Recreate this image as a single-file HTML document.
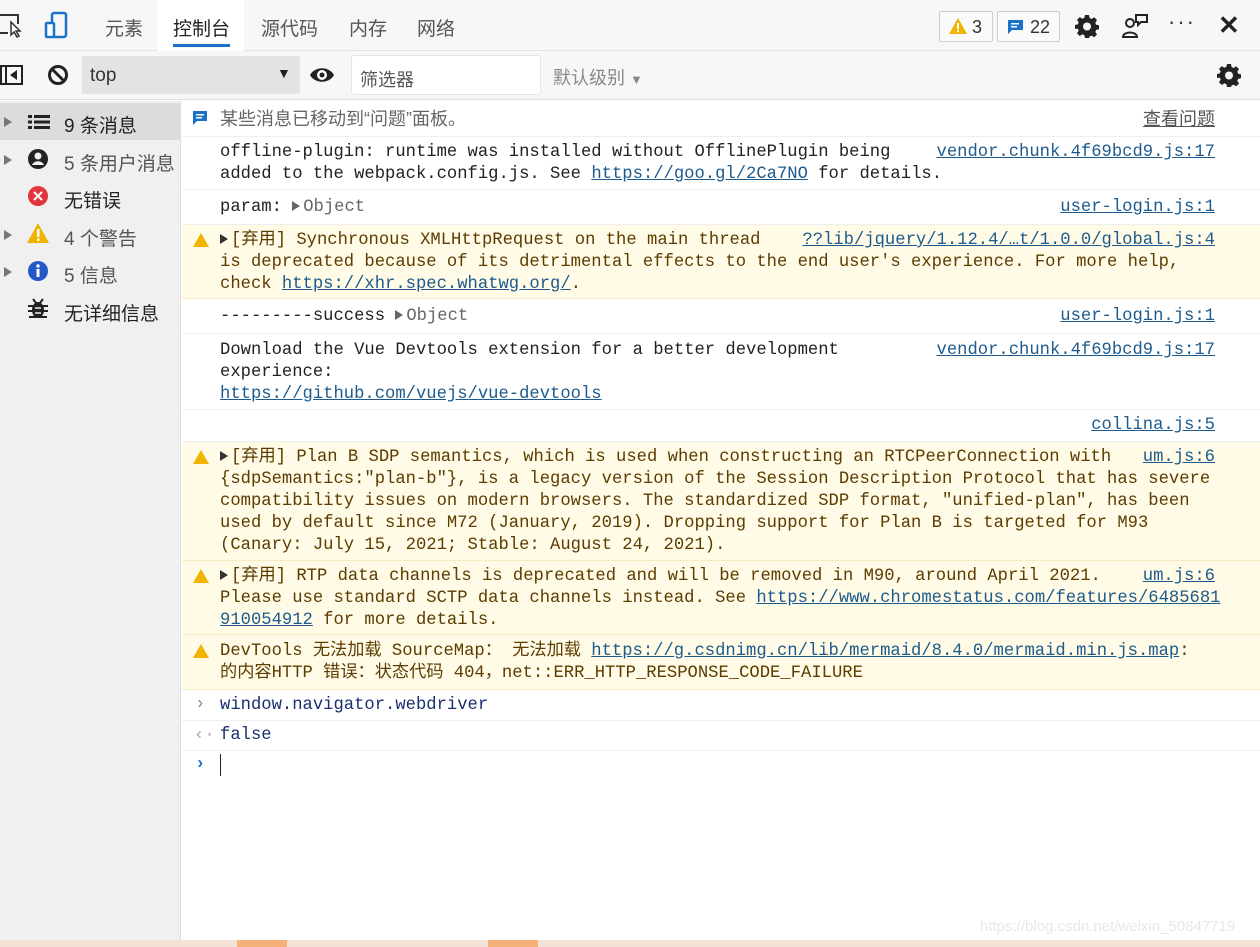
<!DOCTYPE html>
<html><head><meta charset="utf-8"><style>
*{margin:0;padding:0;box-sizing:border-box}
body{width:1260px;height:947px;overflow:hidden;background:#fff;font-family:"Liberation Sans","Noto Sans CJK SC",sans-serif;position:relative;color:#222}
.top{position:absolute;left:0;top:0;width:1260px;height:51px;background:#f7f7f7;border-bottom:1px solid #e4e4e4}
.tab{position:absolute;top:14px;font-size:19px;color:#555}
.bar{position:absolute;left:0;top:51px;width:1260px;height:49px;background:#f7f7f7;border-bottom:1px solid #e0e0e0}
.side{position:absolute;left:0;top:101px;width:181px;height:846px;background:#f0f0f0;border-right:1px solid #ddd}
.si{position:absolute;left:0;width:180px;height:37px;font-size:19px;color:#555}
.si .t{position:absolute;left:64px;top:8px}
.si .a{position:absolute;left:4px;top:14px;width:0;height:0;border-left:8px solid #777;border-top:5px solid transparent;border-bottom:5px solid transparent}
.row{position:absolute;left:182px;width:1078px;border-bottom:1px solid #eee;font-family:"Liberation Mono","Noto Sans CJK SC",monospace;font-size:17.2px;line-height:22px;color:#222}
.row .m{position:absolute;left:38px;white-space:pre}
.row .s{position:absolute;right:45px;color:#1d5b8e;text-decoration:underline}
.w{background:#fffbe6;border-bottom:1px solid #f5ecc0;color:#5c3c00}
a{color:#1d5b8e;text-decoration:underline}
.wi{position:absolute;left:11px;width:0;height:0;border-left:8px solid transparent;border-right:8px solid transparent;border-bottom:14px solid #f0b400}
.g{color:#666}
.tri{display:inline-block;width:0;height:0;border-left:8px solid #333;border-top:5px solid transparent;border-bottom:5px solid transparent;margin-right:3px}
</style></head><body>
<div class="top">
<svg style="position:absolute;left:0;top:12px" width="24" height="26"><path d="M0 3h18v9M0 21h8" stroke="#333" stroke-width="2" fill="none"/><path d="M11 10l0 13 3-3 3 5 2-1-3-5 4 0z" fill="#fff" stroke="#333" stroke-width="1.5"/></svg>
<svg style="position:absolute;left:44px;top:11px" width="26" height="28"><rect x="8" y="2" width="14" height="24" rx="2" stroke="#1a73c8" stroke-width="2.5" fill="none"/><rect x="2" y="12" width="8" height="14" rx="1" stroke="#1a73c8" stroke-width="2.5" fill="#fff"/></svg>
<div class="tab" style="left:105px">元素</div>
<div style="position:absolute;left:158px;top:0;width:86px;height:51px;background:#fff"></div>
<div class="tab" style="left:173px;color:#222">控制台</div>
<div style="position:absolute;left:173px;top:44px;width:57px;height:3px;background:#1a73c8"></div>
<div class="tab" style="left:261px">源代码</div>
<div class="tab" style="left:349px">内存</div>
<div class="tab" style="left:417px">网络</div>
<div style="position:absolute;left:939px;top:11px;width:54px;height:31px;border:1px solid #ccc;border-radius:2px;background:#fafafa"><svg style="position:absolute;left:9px;top:6px" width="18" height="16"><path d="M9 0L18 16H0z" fill="#f0b400"/><rect x="8" y="5" width="2" height="6" fill="#fff"/><rect x="8" y="12" width="2" height="2" fill="#fff"/></svg><span style="position:absolute;left:32px;top:5px;font-size:18px;color:#333">3</span></div>
<div style="position:absolute;left:997px;top:11px;width:63px;height:31px;border:1px solid #ccc;border-radius:2px;background:#fafafa"><svg style="position:absolute;left:10px;top:8px" width="15" height="15"><path d="M0 0h15v10H4l-4 4z" fill="#1a73c8"/><rect x="3" y="3" width="8" height="1.5" fill="#fff"/><rect x="3" y="6" width="6" height="1.5" fill="#fff"/></svg><span style="position:absolute;left:32px;top:5px;font-size:18px;color:#333">22</span></div>
<svg style="position:absolute;left:1075px;top:14px" width="24" height="24" viewBox="0 0 24 24"><path fill="#222" d="M10 1h4l.6 3 2 1 2.6-1.7 2.8 2.8L20.3 8.7l.9 2 2.8.6v4l-2.8.6-.9 2 1.7 2.6-2.8 2.8-2.6-1.7-2 .9L14 24h-4l-.6-2.8-2-.9-2.6 1.7-2.8-2.8 1.7-2.6-.9-2L0 15v-4l2.8-.6.9-2L2 5.9 4.8 3.1 7.4 4.8l2-1z"/><circle cx="12" cy="12.5" r="4" fill="#f7f7f7"/></svg>
<svg style="position:absolute;left:1122px;top:13px" width="28" height="26"><circle cx="8" cy="10" r="4" stroke="#222" stroke-width="2" fill="none"/><path d="M1 24c0-6 14-6 14 0z" stroke="#222" stroke-width="2" fill="none"/><path d="M14 2h11v7h-6l-3 3v-3h-2z" stroke="#222" stroke-width="2" fill="none"/></svg>
<div style="position:absolute;left:1168px;top:9px;font-size:22px;color:#333;letter-spacing:2px">···</div>
<div style="position:absolute;left:1218px;top:10px;font-size:26px;font-weight:bold;color:#222">✕</div>
</div>
<div class="bar">
<svg style="position:absolute;left:0;top:14px" width="24" height="20"><rect x="1" y="1" width="21" height="18" stroke="#222" stroke-width="2" fill="none"/><rect x="5" y="1" width="2" height="18" fill="#222"/><path d="M17 5v10l-7-5z" fill="#222"/></svg>
<svg style="position:absolute;left:47px;top:13px" width="22" height="22"><circle cx="11" cy="11" r="8.5" stroke="#222" stroke-width="3" fill="none"/><path d="M5 5l12 12" stroke="#222" stroke-width="3"/></svg>
<div style="position:absolute;left:82px;top:5px;width:218px;height:38px;background:#e3e3e3;border-radius:2px"><span style="position:absolute;left:8px;top:9px;font-size:19px;color:#333">top</span><span style="position:absolute;left:195px;top:9px;font-size:14px;color:#222">▼</span></div>
<svg style="position:absolute;left:309px;top:14px" width="26" height="20"><path d="M1 10C6 1 20 1 25 10 20 19 6 19 1 10z" fill="#222"/><circle cx="13" cy="10" r="5" fill="#fff"/><circle cx="13" cy="10" r="2.5" fill="#222"/></svg>
<div style="position:absolute;left:351px;top:4px;width:190px;height:40px;background:#fff;border:1px solid #e6e6e6;border-radius:3px"><span style="position:absolute;left:8px;top:10px;font-size:18px;color:#555">筛选器</span></div>
<div style="position:absolute;left:553px;top:13px;font-size:18px;color:#888">默认级别 <span style="font-size:13px">▼</span></div>
<svg style="position:absolute;left:1217px;top:12px" width="24" height="24" viewBox="0 0 24 24"><path fill="#222" d="M10 1h4l.6 3 2 1 2.6-1.7 2.8 2.8L20.3 8.7l.9 2 2.8.6v4l-2.8.6-.9 2 1.7 2.6-2.8 2.8-2.6-1.7-2 .9L14 24h-4l-.6-2.8-2-.9-2.6 1.7-2.8-2.8 1.7-2.6-.9-2L0 15v-4l2.8-.6.9-2L2 5.9 4.8 3.1 7.4 4.8l2-1z"/><circle cx="12" cy="12.5" r="4" fill="#f7f7f7"/></svg>
</div>
<div class="side">
<div class="si" style="top:2px;background:#dcdcdc"><div class="a"></div><div style="position:absolute;left:28px;top:12px;width:22px;height:14px;background:repeating-linear-gradient(#222 0 3px,transparent 3px 5.5px)"></div><div style="position:absolute;left:32px;top:11px;width:2px;height:15px;background:#dcdcdc"></div><span class="t" style="color:#222">9 条消息</span></div>
<div class="si" style="top:40px"><div class="a"></div><svg style="position:absolute;left:27px;top:7px" width="22" height="22"><circle cx="11" cy="11" r="10" fill="#222"/><circle cx="11" cy="8" r="3.5" fill="#f0f0f0"/><path d="M5 17c2-5 10-5 12 0z" fill="#f0f0f0"/></svg><span class="t">5 条用户消息</span></div>
<div class="si" style="top:77px"><svg style="position:absolute;left:27px;top:7px" width="22" height="22"><circle cx="11" cy="11" r="10" fill="#e0363d"/><path d="M7 7l8 8M15 7l-8 8" stroke="#fff" stroke-width="2"/></svg><span class="t" style="color:#222">无错误</span></div>
<div class="si" style="top:115px"><div class="a"></div><svg style="position:absolute;left:27px;top:6px" width="22" height="22"><path d="M11 1L22 21H0z" fill="#f0b400"/><rect x="10" y="7" width="2.5" height="8" fill="#fff"/><rect x="10" y="16.5" width="2.5" height="2.5" fill="#fff"/></svg><span class="t">4 个警告</span></div>
<div class="si" style="top:152px"><div class="a"></div><svg style="position:absolute;left:27px;top:7px" width="22" height="22"><circle cx="11" cy="11" r="10" fill="#2458c8"/><rect x="9.5" y="9" width="3" height="8" fill="#fff"/><circle cx="11" cy="6" r="1.7" fill="#fff"/></svg><span class="t">5 信息</span></div>
<div class="si" style="top:190px"><svg style="position:absolute;left:28px;top:7px" width="20" height="22"><ellipse cx="10" cy="12" rx="6" ry="8" fill="#222"/><path d="M0 8h20M0 13h20M1 19h18M5 1l3 4M15 1l-3 4" stroke="#222" stroke-width="2"/><path d="M7 10h6M7 15h6" stroke="#f0f0f0" stroke-width="1.5"/></svg><span class="t" style="color:#222">无详细信息</span></div>
</div>

<div class="row" style="top:101px;height:36px;font-family:'Liberation Sans','Noto Sans CJK SC',sans-serif;font-size:18px"><svg style="position:absolute;left:11px;top:10px" width="15" height="15"><path d="M0 0h14v10H4l-4 4z" fill="#1a73c8"/><rect x="3" y="3" width="8" height="1.5" fill="#fff"/><rect x="3" y="6" width="6" height="1.5" fill="#fff"/></svg><span class="m" style="top:7px;color:#666">某些消息已移动到“问题”面板。</span><span class="s" style="top:7px;color:#555">查看问题</span></div>
<div class="row" style="top:137px;height:53px"><span class="m" style="top:5px">offline-plugin: runtime was installed without OfflinePlugin being
added to the webpack.config.js. See <a>https://goo.gl/2Ca7NO</a> for details.</span><span class="s" style="top:5px">vendor.chunk.4f69bcd9.js:17</span></div>
<div class="row" style="top:190px;height:35px"><span class="m" style="top:7px">param: <span class="tri" style="border-left-color:#666"></span><span class="g">Object</span></span><span class="s" style="top:7px">user-login.js:1</span></div>
<div class="row w" style="top:225px;height:74px"><div class="wi" style="top:8px"></div><span class="m" style="top:5px"><span class="tri"></span>[弃用] Synchronous XMLHttpRequest on the main thread
is deprecated because of its detrimental effects to the end user's experience. For more help,
check <a>https://xhr.spec.whatwg.org/</a>.</span><span class="s" style="top:5px">??lib/jquery/1.12.4/…t/1.0.0/global.js:4</span></div>
<div class="row" style="top:299px;height:35px"><span class="m" style="top:7px">---------success <span class="tri" style="border-left-color:#666"></span><span class="g">Object</span></span><span class="s" style="top:7px">user-login.js:1</span></div>
<div class="row" style="top:334px;height:76px"><span class="m" style="top:6px">Download the Vue Devtools extension for a better development
experience:
<a>https://github.com/vuejs/vue-devtools</a></span><span class="s" style="top:6px">vendor.chunk.4f69bcd9.js:17</span></div>
<div class="row" style="top:410px;height:32px"><span class="s" style="top:5px">collina.js:5</span></div>
<div class="row w" style="top:442px;height:119px"><div class="wi" style="top:8px"></div><span class="m" style="top:5px"><span class="tri"></span>[弃用] Plan B SDP semantics, which is used when constructing an RTCPeerConnection with
{sdpSemantics:"plan-b"}, is a legacy version of the Session Description Protocol that has severe
compatibility issues on modern browsers. The standardized SDP format, "unified-plan", has been
used by default since M72 (January, 2019). Dropping support for Plan B is targeted for M93
(Canary: July 15, 2021; Stable: August 24, 2021).</span><span class="s" style="top:5px">um.js:6</span></div>
<div class="row w" style="top:561px;height:74px"><div class="wi" style="top:8px"></div><span class="m" style="top:5px"><span class="tri"></span>[弃用] RTP data channels is deprecated and will be removed in M90, around April 2021.
Please use standard SCTP data channels instead. See <a>https://www.chromestatus.com/features/6485681</a>
<a>910054912</a> for more details.</span><span class="s" style="top:5px">um.js:6</span></div>
<div class="row w" style="top:635px;height:55px"><div class="wi" style="top:9px"></div><span class="m" style="top:6px">DevTools 无法加载 SourceMap： 无法加载 <a>https://g.csdnimg.cn/lib/mermaid/8.4.0/mermaid.min.js.map</a>:
的内容HTTP 错误：状态代码 404，net::ERR_HTTP_RESPONSE_CODE_FAILURE</span></div>
<div class="row" style="top:690px;height:31px"><span style="position:absolute;left:13px;top:4px;color:#888">›</span><span class="m" style="top:5px;color:#1a2f6e">window.navigator.webdriver</span></div>
<div class="row" style="top:721px;height:30px"><span style="position:absolute;left:12px;top:4px;color:#aaa">‹·</span><span class="m" style="top:4px;color:#1a2f6e">false</span></div>
<div class="row" style="top:751px;height:30px;border:none"><span style="position:absolute;left:13px;top:3px;color:#1a73c8;font-weight:bold">›</span><span style="position:absolute;left:38px;top:3px;width:1px;height:22px;background:#222"></span></div>
<div style="position:absolute;left:980px;top:918px;font-size:15px;color:#e8e8e8">https://blog.csdn.net/weixin_50847719</div>
<div style="position:absolute;left:0;top:940px;width:1260px;height:7px;background:#f3e3d6"></div>
<div style="position:absolute;left:237px;top:940px;width:50px;height:7px;background:#f6b178"></div>
<div style="position:absolute;left:488px;top:940px;width:50px;height:7px;background:#f6b178"></div>
</body></html>
